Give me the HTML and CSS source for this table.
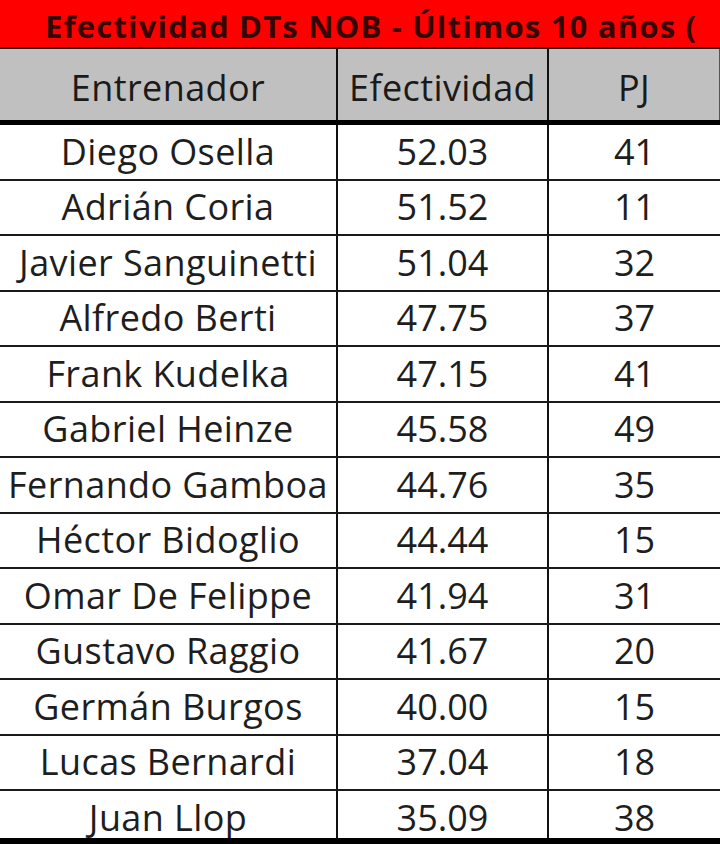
FILE: index.html
```html
<!DOCTYPE html>
<html lang="es">
<head>
<meta charset="utf-8">
<title>Efectividad DTs NOB</title>
<link rel="stylesheet" href="styles.css">
</head>
<body>
<div class="sheet">
  <div class="title"><span class="title-text">Efectividad DTs NOB - Últimos 10 años (</span></div>
  <div class="row head">
    <div class="cell">Entrenador</div>
    <div class="cell">Efectividad</div>
    <div class="cell">PJ</div>
  </div>
  <div class="row"><div class="cell">Diego Osella</div><div class="cell">52.03</div><div class="cell">41</div></div>
  <div class="row"><div class="cell">Adrián Coria</div><div class="cell">51.52</div><div class="cell">11</div></div>
  <div class="row"><div class="cell">Javier Sanguinetti</div><div class="cell">51.04</div><div class="cell">32</div></div>
  <div class="row"><div class="cell">Alfredo Berti</div><div class="cell">47.75</div><div class="cell">37</div></div>
  <div class="row"><div class="cell">Frank Kudelka</div><div class="cell">47.15</div><div class="cell">41</div></div>
  <div class="row"><div class="cell">Gabriel Heinze</div><div class="cell">45.58</div><div class="cell">49</div></div>
  <div class="row"><div class="cell">Fernando Gamboa</div><div class="cell">44.76</div><div class="cell">35</div></div>
  <div class="row"><div class="cell">Héctor Bidoglio</div><div class="cell">44.44</div><div class="cell">15</div></div>
  <div class="row"><div class="cell">Omar De Felippe</div><div class="cell">41.94</div><div class="cell">31</div></div>
  <div class="row"><div class="cell">Gustavo Raggio</div><div class="cell">41.67</div><div class="cell">20</div></div>
  <div class="row"><div class="cell">Germán Burgos</div><div class="cell">40.00</div><div class="cell">15</div></div>
  <div class="row"><div class="cell">Lucas Bernardi</div><div class="cell">37.04</div><div class="cell">18</div></div>
  <div class="row"><div class="cell">Juan Llop</div><div class="cell">35.09</div><div class="cell">38</div></div>
</div>
</body>
</html>
```
FILE: styles.css
```css
html {
  background: #000;
}
body {
  margin: 0;
  background: #000;
  font-family: "Open Sans", Lato, sans-serif;
}
.sheet {
  width: 720px;
  height: 838px;
  overflow: hidden;
  background: #fff;
}
.title {
  height: 44px;
  padding-top: 3px;
  background: #ff0000;
  border-bottom: 2px solid #2a1010;
  box-sizing: content-box;
  overflow: hidden;
  white-space: nowrap;
  padding-left: 45px;
}
.title-text {
  font-weight: 700;
  font-size: 31px;
  letter-spacing: 1.2px;
  line-height: 47px;
  color: #360505;
}
.row {
  display: grid;
  grid-template-columns: 338px 211px 1fr;
  height: 55.5px;
  box-sizing: border-box;
  border-bottom: 2px solid #1a1a1a;
}
.row.head {
  height: 76px;
  background: #c0c0c0;
  border-bottom: 5px solid #000;
}
.cell {
  display: flex;
  align-items: center;
  justify-content: center;
  font-size: 36px;
  line-height: 44px;
  color: #1e1e1e;
  white-space: nowrap;
  overflow: hidden;
}
.cell:nth-child(1) {
  letter-spacing: 0.4px;
}
.cell:nth-child(1),
.cell:nth-child(2) {
  border-right: 2px solid #111;
}
.head .cell {
  padding-top: 6px;
  letter-spacing: 0.4px;
  color: #1a1a1a;
}
.head .cell:nth-child(3) {
  border-right: 1px solid #555;
}
```
